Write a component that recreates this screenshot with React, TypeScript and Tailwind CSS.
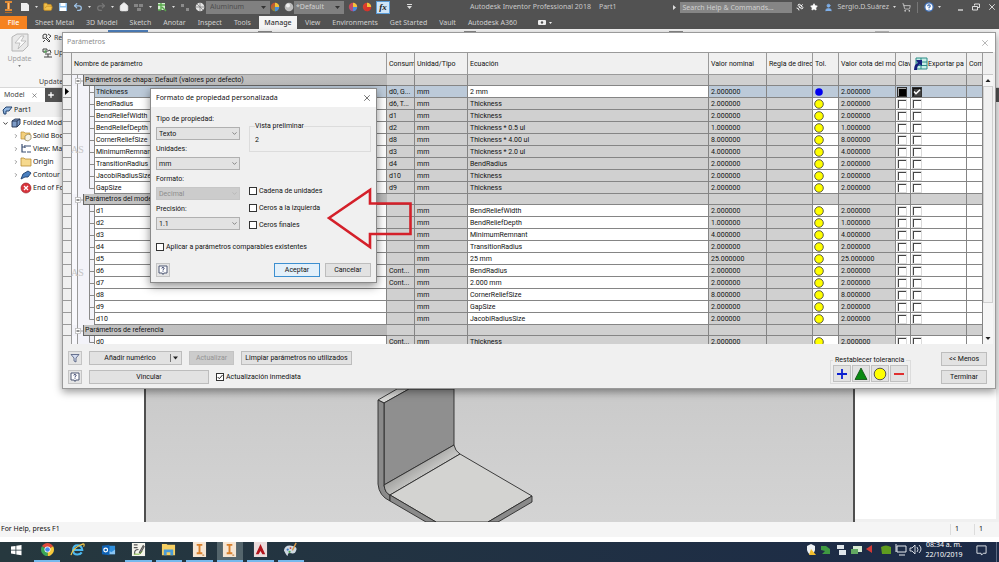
import type { ReactNode } from "react";
import {
  ChevronDown,
  ChevronRight,
  CircleHelp,
  FolderOpen,
  House,
  Plus,
  Redo2,
  Satellite,
  ShoppingCart,
  Star,
  Undo2,
  User,
  X,
} from "lucide-react";

type Kind = "sheet" | "model" | "reference";

interface Param {
  name: string;
  usedBy: string;
  equation: string;
  value: string;
  selected?: boolean;
}

interface Group {
  title: string;
  kind: Kind;
  rows: Param[];
}

const groups: Group[] = [
  {
    title: "Parámetros de chapa: Default (valores por defecto)",
    kind: "sheet",
    rows: [
      { name: "Thickness", usedBy: "d0, G...", equation: "2 mm", value: "2.000000", selected: true },
      { name: "BendRadius", usedBy: "d6, T...", equation: "Thickness", value: "2.000000" },
      { name: "BendReliefWidth", usedBy: "d1", equation: "Thickness", value: "2.000000" },
      { name: "BendReliefDepth", usedBy: "d2", equation: "Thickness * 0.5 ul", value: "1.000000" },
      { name: "CornerReliefSize", usedBy: "d8", equation: "Thickness * 4.00 ul", value: "8.000000" },
      { name: "MinimumRemnant", usedBy: "d3", equation: "Thickness * 2.0 ul", value: "4.000000" },
      { name: "TransitionRadius", usedBy: "d4", equation: "BendRadius", value: "2.000000" },
      { name: "JacobiRadiusSize", usedBy: "d10", equation: "Thickness", value: "2.000000" },
      { name: "GapSize", usedBy: "d9", equation: "Thickness", value: "2.000000" },
    ],
  },
  {
    title: "Parámetros del modelo",
    kind: "model",
    rows: [
      { name: "d1", usedBy: "", equation: "BendReliefWidth", value: "2.000000" },
      { name: "d2", usedBy: "", equation: "BendReliefDepth", value: "1.000000" },
      { name: "d3", usedBy: "", equation: "MinimumRemnant", value: "4.000000" },
      { name: "d4", usedBy: "", equation: "TransitionRadius", value: "2.000000" },
      { name: "d5", usedBy: "", equation: "25 mm", value: "25.000000" },
      { name: "d6", usedBy: "Cont...", equation: "BendRadius", value: "2.000000" },
      { name: "d7", usedBy: "Cont...", equation: "2.000 mm", value: "2.000000" },
      { name: "d8", usedBy: "", equation: "CornerReliefSize", value: "8.000000" },
      { name: "d9", usedBy: "", equation: "GapSize", value: "2.000000" },
      { name: "d10", usedBy: "", equation: "JacobiRadiusSize", value: "2.000000" },
    ],
  },
  {
    title: "Parámetros de referencia",
    kind: "reference",
    rows: [{ name: "d0", usedBy: "Cont...", equation: "Thickness", value: "2.000000" }],
  },
];

/* ---------- main application frame ---------- */

function Swatch({ id, a, b, badge }: { id: string; a: string; b: string; badge?: string }) {
  return (
    <svg viewBox="0 0 10 10" className="size-[10px] shrink-0">
      <defs>
        <linearGradient id={id} x1="0" x2="1" y1="0" y2="1">
          <stop offset="0" stopColor={a} />
          <stop offset="1" stopColor={b} />
        </linearGradient>
      </defs>
      <circle cx="5" cy="5" r="4.2" fill={`url(#${id})`} />
      <path d="M5 5 9.2 5A4.2 4.2 0 0 1 5 9.2Z" fill={badge ?? "#4b8edb"} />
      <path d="M5 5V.8A4.2 4.2 0 0 1 9.2 5Z" fill="#f3c13a" />
    </svg>
  );
}

function Caret() {
  return (
    <svg viewBox="0 0 3 2" className="h-[2px] w-[3px] shrink-0">
      <path d="M0 0h3L1.500 2Z" fill="#ddd" />
    </svg>
  );
}

function TitleBar() {
  return (
    <header className="flex h-[14px] items-center bg-[#525252] text-[7px] leading-[10px] text-[#c9c9c9]">
      <div className="flex shrink-0 items-center">
        <svg viewBox="0 0 14 14" className="h-[14px] w-4">
          <path d="M4 1h7v2H9v6h2v2H4V9h2V3H4Z" fill="#e08a35" />
          <path d="M7 3h1v6H7Z" fill="#ffc078" />
          <path d="M4 12.5h7" stroke="#b36a23" />
        </svg>
        <div className="flex items-center gap-[5px] pl-1">
          <svg viewBox="0 0 10 10" className="size-[10px]">
            <path d="M1 1h6l2 2v6H1Z" fill="#eee" />
          </svg>
          <Caret />
          <FolderOpen className="size-[10px] fill-[#f2c14c] text-[#c98f22]" />
          <svg viewBox="0 0 10 10" className="size-[10px]">
            <path d="M1 1h8v8H1Z" fill="#8cc0ee" />
            <path d="M2.500 1h5v3h-5ZM2 5.500h6v3.500H2Z" fill="#fff" />
          </svg>
          <Undo2 className="size-[10px] text-[#9fc4e8]" strokeWidth={3} />
          <Caret />
          <Redo2 className="size-[10px] text-[#777]" strokeWidth={3} />
          <Caret />
          <House className="size-[10px] fill-[#eee] text-[#eee]" />
          <svg viewBox="0 0 10 10" className="size-[10px]">
            <path d="M0 2h4v3H0ZM5 2h4v3H5ZM3 6h4v3H3Z" fill="#858585" />
          </svg>
          <Caret />
          <svg viewBox="0 0 10 10" className="size-[10px]">
            <path d="M1 1h7v7H1Z" fill="#d5ecd0" />
            <path d="M1 3h7M4 1v7M5 5l4 4M1 8h3" stroke="#59a84c" strokeWidth="1.4" />
          </svg>
          <Caret />
          <svg viewBox="0 0 10 10" className="size-[10px]">
            <path d="M1 2h3v3H1ZM6 6h3v3H6Z" fill="#8c8c8c" />
          </svg>
          <svg viewBox="0 0 10 10" className="size-[10px]">
            <circle cx="5" cy="5" r="4.3" fill="#e4e4e4" />
            <path d="M1 5h8M5 1v8M2 2l6 6" stroke="#777" strokeWidth=".7" />
          </svg>
        </div>
        <div className="ml-px grid w-16 items-center">
          <select
            aria-label="Material"
            className="col-start-1 row-start-1 h-[13px] w-full appearance-none bg-[#808080] pl-1 text-[#4e4e4e]"
          >
            <option>Aluminum</option>
          </select>
          <svg viewBox="0 0 5 3" className="col-start-1 row-start-1 mr-1 h-[3px] w-[5px] justify-self-end">
            <path d="M0 0h5L2.500 3Z" fill="#333" />
          </svg>
        </div>
        <Swatch id="sw-color" a="#e03a2a" b="#5fb54a" />
        <svg viewBox="0 0 10 10" className="ml-1 size-[10px]">
          <circle cx="5" cy="5" r="4.300" fill="#bdbdbd" />
          <circle cx="4" cy="3.500" r="2" fill="#efefef" />
        </svg>
        <div className="grid w-[50px] items-center">
          <select
            aria-label="Aspecto"
            className="col-start-1 row-start-1 h-[13px] w-full appearance-none bg-[#808080] pl-[2px] text-[#d2d2d2]"
          >
            <option>*Default</option>
          </select>
          <svg viewBox="0 0 5 3" className="col-start-1 row-start-1 mr-1 h-[3px] w-[5px] justify-self-end">
            <path d="M0 0h5L2.500 3Z" fill="#333" />
          </svg>
        </div>
        <div className="flex items-center gap-1 pl-1">
          <Swatch id="sw-adjust" a="#e0452e" b="#8a56c4" />
          <Swatch id="sw-clear" a="#e0452e" b="#cc2b2b" badge="#d8342a" />
          <button
            type="button"
            aria-label="Parámetros"
            className="h-[13px] w-[14px] border border-[#5a9bd5] bg-[#cfe4f7] font-['Liberation_Serif',serif] text-[9px] leading-[10px] font-bold text-[#222] italic"
          >
            fx
          </button>
          <svg viewBox="0 0 7 6" className="ml-3 h-[6px] w-[7px]">
            <path d="M1 0h5v1H1ZM1 2h5L3.500 5Z" fill="#ddd" />
          </svg>
        </div>
      </div>
      <div className="flex flex-1 justify-center gap-2 whitespace-nowrap">
        <span>Autodesk Inventor Professional 2018</span>
        <span>Part1</span>
      </div>
      <div className="flex shrink-0 items-center">
        <svg viewBox="0 0 3 5" className="mr-1 h-[5px] w-[3px]">
          <path d="M0 0 3 2.500 0 5Z" fill="#ddd" />
        </svg>
        <input
          type="text"
          aria-label="Search"
          placeholder="Search Help & Commands..."
          className="h-[11px] w-28 bg-[#858585] pl-[2px] text-[7px] placeholder:text-[#d0d0d0]"
        />
        <div className="flex items-center gap-[6px] pl-1">
          <Satellite className="size-[8px] text-white" strokeWidth={3} />
          <Star className="size-[8px] fill-white text-white" />
        </div>
        <User className="ml-[6px] size-[9px] fill-[#7fb0ea] text-[#7fb0ea]" />
        <span className="mr-1 ml-1">Sergio.D.Suárez</span>
        <Caret />
        <ShoppingCart className="ml-[6px] size-[9px] text-[#ddd]" />
        <span className="ml-[6px] h-[11px] w-px bg-[#777]" />
        <CircleHelp className="mr-1 ml-[6px] size-[10px] fill-white text-[#3f6fb5]" strokeWidth={3} />
        <Caret />
        <div className="flex items-center gap-[7px] pr-[2px] pl-4">
          <svg viewBox="0 0 8 8" className="size-[8px]">
            <path d="M1 7h5" stroke="#eee" strokeWidth="1.200" />
          </svg>
          <svg viewBox="0 0 8 8" className="size-[8px]">
            <path d="M2.500 2.500v-1.500h5v3.500h-1.500M.5 3.500h5v3.500h-5Z" fill="none" stroke="#eee" strokeWidth=".9" />
          </svg>
          <X className="size-[10px] text-[#eee]" />
        </div>
      </div>
    </header>
  );
}

function RibbonTabs() {
  const before = ["Sheet Metal", "3D Model", "Sketch", "Anotar", "Inspect", "Tools"];
  const after = ["View", "Environments", "Get Started", "Vault", "Autodesk A360"];
  return (
    <nav className="flex h-[15px] items-end bg-[#525252] text-[7px] leading-[13px] whitespace-nowrap text-[#d0d0d0]">
      <button type="button" className="h-[13px] w-[27px] bg-[#f58220] font-medium text-white">
        File
      </button>
      <div className="flex gap-3 px-2">
        {before.map((tab) => (
          <button key={tab} type="button" className="h-[13px]">
            {tab}
          </button>
        ))}
      </div>
      <button type="button" className="h-[13px] w-[38px] bg-[#f5f5f5] font-medium text-[#333]">
        Manage
      </button>
      <div className="flex gap-3 px-2">
        {after.map((tab) => (
          <button key={tab} type="button" className="h-[13px]">
            {tab}
          </button>
        ))}
      </div>
      <svg viewBox="0 0 15 13" className="ml-3 h-[13px] w-[15px]">
        <rect x="1" y="4" width="8" height="5" rx="1" fill="#eee" />
        <circle cx="5" cy="6.500" r="1.200" fill="#525252" />
        <path d="M12 6h3l-1.500 2Z" fill="#eee" />
      </svg>
    </nav>
  );
}

function Ribbon() {
  return (
    <section className="flex h-[59px] border-b border-[#d8d8d8] bg-[#f5f5f5] text-[7px] leading-[10px] text-[#444]">
      <div className="flex w-[39px] flex-col items-center pt-1 text-[#a0a0a0]">
        <svg viewBox="0 0 20 20" className="size-5">
          <path d="M2 4 7 1h11v12l-5 5H2Z" fill="#e9e9e9" stroke="#b5b5b5" />
          <path d="M11 3 5 10h5l-2 6 8-8h-5l3-5Z" fill="#fafafa" stroke="#b5b5b5" strokeWidth=".8" />
        </svg>
        <span className="mt-px">Update</span>
        <svg viewBox="0 0 4 3" className="mt-px h-[2px] w-[3px]">
          <path d="M0 0h4L2 3Z" fill="#777" />
        </svg>
      </div>
      <div className="flex w-[69px] flex-col pt-1">
        <div className="flex h-[15px] gap-[2px] pl-[3px]">
          <svg viewBox="0 0 10 10" className="size-[10px]">
            <path d="M1 2l2-1 2 1-1 2 4 4-1 1-4-4-2 .5ZM6 1l3 2-2 2M1 9l2-2" fill="none" stroke="#444" />
          </svg>
          <span>Rebuild All</span>
        </div>
        <div className="flex h-[15px] gap-[2px] pl-[3px]">
          <svg viewBox="0 0 10 10" className="size-[10px]">
            <path d="M1 1h4v3H1ZM3 6h6M6 6v3M2 9h8M6 3l2-1 1 3" fill="none" stroke="#444" />
            <path d="M3 1.500 5 4 2 5Z" fill="#56a658" />
          </svg>
          <span>Update Mass</span>
        </div>
        <span className="mt-[14px]">Update</span>
      </div>
      <div className="mt-px h-4 w-10 border-t-2 border-[#4f81bd] bg-[#cfdff0]" />
      <div className="flex flex-1 justify-between px-[110px]">
        <span className="mt-[2px] h-px w-[14px] bg-[#888]" />
        <span className="mt-[2px] h-px w-3 bg-[#888]" />
        <span className="mt-[2px] h-px w-[14px] bg-[#888]" />
        <span className="mt-[2px] h-px w-[14px] bg-[#bbb]" />
      </div>
    </section>
  );
}

const treeItems: { label: string; icon: ReactNode; leaf?: boolean }[] = [
  {
    label: "Solid Bodies(1)",
    icon: (
      <>
        <path d="M1 2h3l1 1h5v6H1Z" fill="#f3cf7c" stroke="#b98d35" strokeWidth=".7" />
        <path d="M5 6l3-2 3 1v4l-3 2-3-1Z" fill="#f6f2e4" stroke="#8a7a4a" strokeWidth=".7" />
      </>
    ),
  },
  {
    label: "View: Master",
    icon: <path d="M2 1v8h4M2 4h3M6 3h5M7 9h4M5 2v3" fill="none" stroke="#3b4f72" strokeWidth="1.200" />,
  },
  {
    label: "Origin",
    icon: <path d="M1 2h3l1 1h6v7H1Z" fill="#f6d98e" stroke="#b98d35" strokeWidth=".8" />,
  },
  {
    label: "Contour Flange1",
    icon: <path d="M1 10 3 5l5-3 3 2-3 4H5Z" fill="#4a7fbf" stroke="#1d3f6e" strokeWidth=".9" />,
  },
  {
    label: "End of Folded",
    leaf: true,
    icon: (
      <>
        <circle cx="6" cy="6" r="5" fill="#d9343c" stroke="#8f1f25" strokeWidth=".6" />
        <path d="M4 4l4 4M8 4l-4 4" stroke="#fff" strokeWidth="1.300" />
      </>
    ),
  },
];

function ModelBrowser() {
  return (
    <aside className="w-[146px] shrink-0 border-r-2 border-[#4f4f4f] bg-white text-[7px] leading-[12px] whitespace-nowrap text-[#222]">
      <div className="flex h-[14px] items-center bg-[#525252]">
        <button type="button" className="h-[14px] bg-white pl-1 text-[#444]">
          Model
        </button>
        <button type="button" aria-label="Cerrar panel" className="flex h-[14px] items-center bg-white pr-[7px] pl-[6px]">
          <X className="size-[7px] text-[#555]" />
        </button>
        <button type="button" aria-label="Añadir panel" className="pl-[2px] text-white">
          <Plus className="size-[8px]" strokeWidth={4} />
        </button>
      </div>
      <div className="flex h-[15px] items-center gap-px bg-[#f0f0f0] pl-[2px]">
        <svg viewBox="0 0 11 10" className="h-[10px] w-[11px]">
          <path d="M1 5 4 2h6l-3 4H4v3H2Z" fill="#8fb3dd" stroke="#22436f" />
        </svg>
        Part1
      </div>
      <ul>
        <li className="flex h-[12px] items-center gap-[2px] pl-[2px]">
          <ChevronDown className="size-[7px]" strokeWidth={3} />
          <svg viewBox="0 0 10 10" className="size-[10px]">
            <path d="M1 3 4 1h5v5L6 9H1ZM1 3h5v6M6 3l3-2" fill="#7d9cc8" stroke="#22324f" strokeWidth=".9" />
          </svg>
          Folded Model
        </li>
        {treeItems.map((item) => (
          <li key={item.label} className="flex h-[13px] items-center gap-px pl-[13px]">
            {item.leaf ? (
              <span className="w-[6px]" />
            ) : (
              <ChevronRight className="size-[6px] text-[#777]" strokeWidth={3} />
            )}
            <svg viewBox="0 0 12 12" className="size-3">
              {item.icon}
            </svg>
            {item.label}
          </li>
        ))}
      </ul>
    </aside>
  );
}

function Viewport() {
  return (
    <main className="flex flex-1 flex-col justify-end bg-linear-to-b from-[#b4b4b4] to-[#d4d4d4] pl-[230px]">
      <svg viewBox="376 389 160 133" className="h-[133px] w-40">
        <defs>
          <linearGradient id="bend" x1="0" x2="1" y1="0" y2="1">
            <stop offset=".35" stopColor="#9a9a98" />
            <stop offset=".65" stopColor="#d6d6d4" />
          </linearGradient>
        </defs>
        <g stroke="#2b2b2b" strokeWidth=".9" strokeLinejoin="round">
          <path d="M378 400 397 389H409L384 403Z" fill="#d8d8d6" />
          <path d="M384 403 409 389H454V445L384 485Z" fill="#8f8f8f" />
          <path d="M378 400 384 403V485Q385 493 390 495V501Q379 496 378 484Z" fill="#8a8a8a" />
          <path d="M384 485 454 445Q455 451 460 454L390 495Q385 493 384 485Z" fill="url(#bend)" />
          <path d="M390 495 460 454 532 496 488 522H436Z" fill="#d3d3d1" />
          <path d="M390 495 436 522H426L390 501Z" fill="#8a8a8a" />
          <path d="M532 496V502L498 522H488Z" fill="#8a8a8a" />
        </g>
      </svg>
    </main>
  );
}

/* ---------- shared dialog controls ---------- */

function DialogButton({ children, className }: { children: ReactNode; className: string }) {
  return (
    <button
      type="button"
      className={`flex h-[14px] items-center justify-center border leading-[10px] whitespace-nowrap ${className}`}
    >
      {children}
    </button>
  );
}

function HelpButton() {
  return (
    <button
      type="button"
      aria-label="Ayuda"
      className="flex size-[14px] items-center justify-center border border-[#c4c4c4] bg-[#e4e4e4]"
    >
      <svg viewBox="0 0 10 10" className="size-[10px]">
        <path d="M1 1h8v7H6L5 9.500 4 8H1Z" fill="#fff" stroke="#3d4766" strokeWidth=".9" />
        <path d="M3.800 3.500Q4 2.300 5 2.400T6.100 3.600Q6 4.200 5 4.700V5.500M5 6.300v.9" fill="none" stroke="#222e5c" strokeWidth=".9" />
      </svg>
    </button>
  );
}

function CheckField({ label, checked = false }: { label: string; checked?: boolean }) {
  return (
    <label className="flex h-[10px] items-center gap-[2px] leading-[10px] whitespace-nowrap">
      <span className="grid">
        <input
          type="checkbox"
          defaultChecked={checked}
          className="peer col-start-1 row-start-1 size-[8px] appearance-none border border-[#333] bg-white"
        />
        <svg viewBox="0 0 8 8" className="pointer-events-none col-start-1 row-start-1 hidden size-[8px] peer-checked:block">
          <path d="M1.700 4 3.300 5.700 6.500 2" fill="none" stroke="#222" />
        </svg>
      </span>
      {label}
    </label>
  );
}

function SelectField({ id, label, value, disabled = false }: { id: string; label: string; value: string; disabled?: boolean }) {
  return (
    <div>
      <label htmlFor={id} className="block leading-[10px]">
        {label}
      </label>
      <div className="mt-[3px] grid items-center">
        <select
          id={id}
          disabled={disabled}
          className="col-start-1 row-start-1 h-[13px] w-full appearance-none border border-[#b0b0b0] bg-[#e2e2e2] pl-[2px] leading-[10px] disabled:border-[#c6c6c6] disabled:bg-[#cccccc] disabled:text-[#8d8d8d]"
        >
          <option>{value}</option>
        </select>
        <ChevronDown
          className={`pointer-events-none col-start-1 row-start-1 mr-[2px] size-[7px] justify-self-end ${disabled ? "text-[#aaa]" : "text-[#444]"}`}
        />
      </div>
    </div>
  );
}

/* ---------- parameters window ---------- */

function GridCheck({ label, selected, checked = false }: { label: string; selected?: boolean; checked?: boolean }) {
  return (
    <span className={`grid size-[10px] place-items-center ${selected ? "bg-[#333]" : "bg-[#dadada]"}`}>
      <input
        type="checkbox"
        aria-label={label}
        defaultChecked={checked}
        className={`col-start-1 row-start-1 size-[8px] appearance-none border-t border-l ${selected ? (checked ? "border-[#111] bg-[#444]" : "border-[#aaa] bg-black") : "border-[#444] bg-white"}`}
      />
      {checked && (
        <svg viewBox="0 0 8 8" className="pointer-events-none col-start-1 row-start-1 size-[8px]">
          <path d="M1 3.500 3 5.700 7 1.700" fill="none" stroke="#fff" strokeWidth="1.600" />
        </svg>
      )}
    </span>
  );
}

function ParamRow({ param, kind, last }: { param: Param; kind: Kind; last: boolean }) {
  const { selected } = param;
  const box = "h-[12px] overflow-hidden border-r border-b border-[#858585] p-0";
  const cell = `${box} pt-px leading-[10px]`;
  const grey = selected ? "bg-[#bccad9]" : "bg-[#d0d0d0]";
  const white = selected ? "bg-[#bccad9]" : "bg-white";
  const equationBg = selected || kind === "model" ? "bg-white" : "bg-[#d0d0d0]";
  return (
    <tr>
      <td className="h-[12px] border-r border-b border-[#9a9a9a] bg-[#f0f0f0] p-0">
        {selected && (
          <svg viewBox="0 0 4 7" className="ml-[2px] block h-[7px] w-1">
            <path d="M0 0 4 3.500 0 7Z" fill="#000" />
          </svg>
        )}
      </td>
      <td className="h-[12px] border-r border-[#9a9a9a] bg-[#f8f8fc] p-0" />
      <td className="h-[12px] border-r border-[#858585] bg-[#f3f3f9] p-0">
        <svg viewBox="0 0 16 12" className="block h-[12px] w-4">
          <path d={last ? "M11.500 0V6.500H16" : "M11.500 0V12M11.500 6.500H16"} fill="none" stroke="#8a8a8a" />
        </svg>
      </td>
      <td className={`${cell} ${white} pl-px`}>{param.name}</td>
      <td className={`${cell} ${grey} pl-[2px]`}>{param.usedBy}</td>
      <td className={`${cell} ${grey} pl-[2px]`}>mm</td>
      <td className={`${cell} ${equationBg} pl-[2px]`}>{param.equation}</td>
      <td className={`${cell} ${grey} pl-[2px]`}>{param.value}</td>
      <td className={`${cell} ${grey}`} />
      <td className={`${box} ${white} pl-px`}>
        <svg viewBox="0 0 10 10" className="block size-[10px]">
          {selected ? (
            <circle cx="5" cy="5" r="3.800" fill="#0000f0" />
          ) : (
            <circle cx="5" cy="5" r="4.300" fill="#ffff00" stroke="#333" strokeWidth=".8" />
          )}
        </svg>
      </td>
      <td className={`${cell} ${grey} pl-[2px]`}>{param.value}</td>
      <td className={`${box} ${white} pl-px`}>
        <GridCheck label={`Clave ${param.name}`} selected={selected} />
      </td>
      <td className={`${box} ${white} pl-px`}>
        <GridCheck label={`Exportar ${param.name}`} selected={selected} checked={selected} />
      </td>
      <td className={`${box} ${white}`} />
    </tr>
  );
}

function GroupRows({ group }: { group: Group }) {
  const filler = "h-[11px] border-r border-b border-[#858585] bg-[#d0d0d0] p-0";
  return (
    <>
      <tr>
        <td className="h-[11px] border-r border-b border-[#9a9a9a] bg-[#f0f0f0] p-0" />
        <td colSpan={3} className="h-[11px] bg-[#f3f3f9] p-0">
          <div className="flex h-[11px]">
            <svg viewBox="0 0 11 11" className="h-[11px] w-[11px]">
              <path d="M5.500 0V11" stroke="#9a9a9a" />
              <rect x="3.500" y="3.500" width="5" height="5" fill="#fff" stroke="#bbb" strokeWidth=".8" />
              <path d="M4.500 6H7.500" stroke="#222" />
              <path d="M9 6h2" stroke="#9a9a9a" />
            </svg>
            <div className="flex-1 border-b border-l border-[#666] bg-linear-to-r from-[#c4c4c4] to-[#b9b9b9] pl-px leading-[11px]">
              {group.title}
            </div>
          </div>
        </td>
        {Array.from({ length: 10 }, (_, i) => (
          <td key={i} className={filler} />
        ))}
      </tr>
      {group.rows.map((param, i) => (
        <ParamRow key={param.name} param={param} kind={group.kind} last={i === group.rows.length - 1} />
      ))}
    </>
  );
}

function ParamTable() {
  const head =
    "h-[23px] overflow-hidden border-t border-r border-b border-[#9a9a9a] bg-[#f0f0f0] p-0 pt-px pl-[2px] text-left font-normal";
  return (
    <div className="flex h-[292px] overflow-hidden">
      <table className="w-full flex-1 table-fixed border-separate border-spacing-0 leading-[11px] whitespace-nowrap">
        <colgroup>
          <col className="w-[9px]" />
          <col className="w-[6px]" />
          <col className="w-[17px]" />
          <col className="w-[292px]" />
          <col className="w-[28px]" />
          <col className="w-[53px]" />
          <col />
          <col className="w-[58px]" />
          <col className="w-[46px]" />
          <col className="w-[26px]" />
          <col className="w-[57px]" />
          <col className="w-[15px]" />
          <col className="w-[56px]" />
          <col className="w-[16px]" />
        </colgroup>
        <thead>
          <tr>
            <th className="h-[23px] border-t border-r border-b border-[#9a9a9a] p-0" />
            <th colSpan={3} className={head}>
              Nombre de parámetro
            </th>
            <th className={head}>Consum</th>
            <th className={head}>Unidad/Tipo</th>
            <th className={head}>Ecuación</th>
            <th className={head}>Valor nominal</th>
            <th className={head}>Regla de direc</th>
            <th className={head}>Tol.</th>
            <th className={head}>Valor cota del mo</th>
            <th className={head}>Clav</th>
            <th className={head}>
              <div className="flex items-center">
                <svg viewBox="0 0 15 15" className="size-[15px] shrink-0">
                  <path d="M3 1h11v11H3Z" fill="#c9efe9" stroke="#2b8c86" />
                  <path d="M3 5h11M3 8.500h11M8 1v11" stroke="#2b8c86" />
                  <path d="M1 13Q1 7 5 6L3 3H9V9L7 7.500Q4 8 4 13Z" fill="#16207c" />
                </svg>
                Exportar pa
              </div>
            </th>
            <th className={head}>Com</th>
          </tr>
        </thead>
        <tbody>
          {groups.map((group) => (
            <GroupRows key={group.kind} group={group} />
          ))}
        </tbody>
      </table>
      <div className="mr-[2px] flex w-[10px] shrink-0 flex-col items-center border-t border-[#9a9a9a] bg-[#f6f6f6]">
        <span className="h-[22px] w-full border-b border-[#c9c9c9] bg-[#f0f0f0]" />
        <svg viewBox="0 0 10 11" className="h-[11px] w-[10px]">
          <path d="M2.500 7 5 4 7.500 7Z" fill="#222" />
        </svg>
        <span className="h-[217px] w-full border border-[#cfcfcf] bg-[#f0f0f0]" />
        <span className="flex-1" />
        <svg viewBox="0 0 10 11" className="h-[11px] w-[10px]">
          <path d="M2.500 4 5 7 7.500 4Z" fill="#222" />
        </svg>
      </div>
    </div>
  );
}

const tolerances: { label: string; icon: ReactNode }[] = [
  { label: "Superior", icon: <path d="M7 2V12M2 7H12" stroke="#0a1fd0" strokeWidth="1.800" /> },
  { label: "Mediana", icon: <path d="M7 1 13 12.500H1Z" fill="#0a8a12" stroke="#0a4a0e" strokeWidth=".8" /> },
  { label: "Nominal", icon: <circle cx="7" cy="7" r="5.800" fill="#ffff00" stroke="#444" strokeWidth=".9" /> },
  { label: "Inferior", icon: <path d="M2 7H12" stroke="#e01b1b" strokeWidth="1.800" /> },
];

function ParametersWindow() {
  const flat = "border-[#bdbdbd] bg-[#e2e2e2]";
  return (
    <section className="absolute top-8 right-[3px] left-[62px] border border-[#9a9a9a] bg-[#f0f0f0] font-[Roboto,sans-serif] text-[7px] shadow-[0_3px_8px_rgba(0,0,0,0.4)]">
      <div className="flex h-[19px] items-center justify-between bg-white pr-[5px] pl-1">
        <h1 className="font-['Noto_Sans',sans-serif] text-[#8c8c8c]">Parámetros</h1>
        <button type="button" aria-label="Cerrar">
          <X className="block size-[10px] text-[#8c8c8c]" strokeWidth={1.5} />
        </button>
      </div>
      <div className="relative">
        <ParamTable />
        <span className="absolute top-[93px] left-[8px] font-['Liberation_Serif',serif] text-[10px] leading-[10px] text-[#c4c4c4]">
          AS
        </span>
        <span className="absolute top-[216px] left-[8px] font-['Liberation_Serif',serif] text-[10px] leading-[10px] text-[#c4c4c4]">
          AS
        </span>
      </div>
      <footer className="flex justify-between pt-[7px] pr-2 pb-1 pl-[5px]">
        <div className="flex flex-col gap-[5px]">
          <div className="flex gap-[7px]">
            <button
              type="button"
              aria-label="Filtrar"
              className="flex size-[14px] items-center justify-center border border-[#c4c4c4] bg-[#e4e4e4]"
            >
              <svg viewBox="0 0 10 10" className="size-[10px]">
                <path d="M1 1.500h8L6 5v4L4 8V5Z" fill="#d4dcf0" stroke="#4a5577" strokeWidth=".8" />
              </svg>
            </button>
            <div className="flex">
              <DialogButton className="w-[81px] border-r-0 border-[#bdbdbd] bg-[#e2e2e2]">Añadir numérico</DialogButton>
              <button
                type="button"
                aria-label="Más opciones"
                className="flex h-[14px] w-3 items-center border border-l-0 border-[#bdbdbd] bg-[#e2e2e2]"
              >
                <svg viewBox="0 0 11 10" className="h-[10px] w-[11px]">
                  <path d="M.5 1V9" stroke="#777" />
                  <path d="M3 3.500h5L5.500 6.500Z" fill="#222" />
                </svg>
              </button>
            </div>
            <DialogButton className="w-[45px] border-[#c4c4c4] bg-[#cccccc] text-[#949494]">Actualizar</DialogButton>
            <DialogButton className={`w-[111px] ${flat}`}>Limpiar parámetros no utilizados</DialogButton>
          </div>
          <div className="flex items-center gap-[7px]">
            <HelpButton />
            <DialogButton className={`w-[120px] ${flat}`}>Vincular</DialogButton>
            <CheckField label="Actualización inmediata" checked />
          </div>
        </div>
        <div className="flex gap-[30px]">
          <fieldset className="mt-1 w-[81px] border border-[#dcdcdc] px-[2px] pb-px">
            <legend className="px-[2px] leading-[10px] whitespace-nowrap">Restablecer tolerancia</legend>
            <div className="flex gap-px">
              {tolerances.map((tol) => (
                <button
                  key={tol.label}
                  type="button"
                  aria-label={tol.label}
                  className="flex h-[17px] w-[18px] items-center justify-center border border-[#c0c0c0] bg-[#e2e2e2]"
                >
                  <svg viewBox="0 0 14 14" className="size-[14px]">
                    {tol.icon}
                  </svg>
                </button>
              ))}
            </div>
          </fieldset>
          <div className="flex flex-col gap-[4px] pt-px">
            <DialogButton className={`w-[46px] ${flat}`}>&lt;&lt; Menos</DialogButton>
            <DialogButton className={`w-[46px] ${flat}`}>Terminar</DialogButton>
          </div>
        </div>
      </footer>
    </section>
  );
}

/* ---------- property format dialog ---------- */

function FormatDialog() {
  return (
    <section
      role="dialog"
      aria-label="Formato de propiedad personalizada"
      className="absolute top-[88px] left-[150px] w-[227px] border border-[#8a8a8a] bg-[#f0f0f0] font-[Roboto,sans-serif] text-[7px] text-[#111] shadow-[0_3px_9px_rgba(0,0,0,0.45)]"
    >
      <div className="flex h-[18px] items-center justify-between bg-white pr-1 pl-[5px]">
        <h2 className="font-['Noto_Sans',sans-serif]">Formato de propiedad personalizada</h2>
        <button type="button" aria-label="Cerrar">
          <X className="block size-[10px] text-[#222]" strokeWidth={1.5} />
        </button>
      </div>
      <form className="px-[5px] pt-[7px] pb-[5px]">
        <div className="flex gap-[9px]">
          <div className="flex w-[84px] flex-col gap-1">
            <SelectField id="property-type" label="Tipo de propiedad:" value="Texto" />
            <SelectField id="units" label="Unidades:" value="mm" />
            <SelectField id="format" label="Formato:" value="Decimal" disabled />
            <SelectField id="precision" label="Precisión:" value="1.1" />
          </div>
          <div className="flex flex-1 flex-col justify-between pt-[7px]">
            <fieldset className="border border-[#dcdcdc] px-[5px] pb-[6px]">
              <legend className="leading-[10px]">Vista preliminar</legend>
              <p className="pt-1 leading-[10px]">2</p>
            </fieldset>
            <div className="flex flex-col gap-[7px]">
              <CheckField label="Cadena de unidades" />
              <CheckField label="Ceros a la izquierda" />
              <CheckField label="Ceros finales" />
            </div>
          </div>
        </div>
        <div className="mt-3">
          <CheckField label="Aplicar a parámetros comparables existentes" />
        </div>
        <div className="mt-[11px] flex justify-between">
          <HelpButton />
          <div className="flex gap-[5px]">
            <DialogButton className="w-[46px] border-[#3c8fd0] bg-[#e3f0fa]">Aceptar</DialogButton>
            <DialogButton className="w-[46px] border-[#bdbdbd] bg-[#e2e2e2]">Cancelar</DialogButton>
          </div>
        </div>
      </form>
    </section>
  );
}

/* ---------- windows taskbar ---------- */

function InventorIcon() {
  return (
    <>
      <path d="M1 0h14v16H1Z" fill="#f7e6d3" />
      <path d="M5 2h6v2H9v7h2v2H5V11h2V4H5Z" fill="#d9802c" />
      <path d="M11 14h2" stroke="#b06820" />
    </>
  );
}

const apps: { label: string; running?: boolean; active?: boolean; icon: ReactNode }[] = [
  {
    label: "Chrome",
    running: true,
    icon: (
      <>
        <path d="M8 8 2 4.500A7 7 0 0 1 14 4.500Z" fill="#e04a3a" />
        <path d="M8 8 14 4.500A7 7 0 0 1 8 15Z" fill="#f7ca3c" />
        <path d="M8 8V15A7 7 0 0 1 2 4.500Z" fill="#3aa757" />
        <circle cx="8" cy="8" r="3.200" fill="#fff" />
        <circle cx="8" cy="8" r="2.500" fill="#4688f1" />
      </>
    ),
  },
  {
    label: "Internet Explorer",
    icon: (
      <>
        <path d="M3.500 8.500H13Q12.500 3.500 8 3.500T3.300 8.500 8 13.300Q11 13.300 12.500 11" fill="none" stroke="#4cb8ee" strokeWidth="2.300" />
        <path d="M1 14Q3 6 14 2Q16 2 14.500 5" fill="none" stroke="#f0c84a" strokeWidth="1.200" />
      </>
    ),
  },
  {
    label: "Outlook",
    icon: (
      <>
        <path d="M7 4h8v9H7Z" fill="#2f8fdc" />
        <path d="M7 8l4 3 4-3v5H7Z" fill="#8bc5f2" />
        <path d="M1 4l8-1v11l-8-1Z" fill="#0f62b5" />
        <circle cx="5" cy="8.500" r="2" fill="none" stroke="#fff" strokeWidth="1.300" />
      </>
    ),
  },
  {
    label: "Notepad++",
    running: true,
    icon: (
      <>
        <path d="M1 1h14v14H1Z" fill="#f4f4ec" />
        <path d="M3 3h4M3 6h4M4 13Q3 8 8 8M9 11l4-7 1 1-4 7Z" fill="none" stroke="#555" strokeWidth="1.200" />
        <path d="M3 13h6l3-3" stroke="#7dbb3c" fill="none" />
      </>
    ),
  },
  {
    label: "Explorador",
    running: true,
    icon: (
      <>
        <path d="M1 2h5l1 1h8v11H1Z" fill="#f5cf62" />
        <path d="M3 8h10v6h-3v-3H6v3H3Z" fill="#4a9bd8" />
      </>
    ),
  },
  { label: "Inventor", running: true, icon: <InventorIcon /> },
  { label: "Inventor 2018", running: true, active: true, icon: <InventorIcon /> },
  {
    label: "AutoCAD",
    running: true,
    icon: (
      <>
        <path d="M1 0h14v16H1Z" fill="#ecdcdc" />
        <path d="M8 2 13 13H10L8 9.500 6 13H3Z" fill="#b3141c" />
      </>
    ),
  },
  {
    label: "Paint",
    running: true,
    icon: (
      <>
        <path d="M1 9Q2 3 9 4T14 9Q13 13 9 12T5 14 1 9Z" fill="#cfd9e2" />
        <path d="M10 9 14 1" stroke="#d79a4a" strokeWidth="1.500" />
        <circle cx="5" cy="8" r="1.200" fill="#3d78c2" />
        <circle cx="8" cy="6.500" r="1" fill="#cf3d35" />
        <circle cx="7" cy="10.500" r="1.200" fill="#4aa84e" />
      </>
    ),
  },
];

function Taskbar() {
  return (
    <footer className="flex h-5 overflow-hidden bg-linear-to-r from-[#26383e] to-[#1c2a47] text-[7px] text-white">
      <button type="button" aria-label="Inicio" className="flex w-8 items-center justify-center pb-[5px]">
        <svg viewBox="0 0 12 12" className="size-3">
          <path d="M1 2.500 5.500 2V5.700H1ZM6.300 1.800 11.500 1V5.700H6.300ZM1 6.500H5.500V10.200L1 9.600ZM6.300 6.500H11.500V11.200L6.300 10.400Z" fill="#fff" />
        </svg>
      </button>
      <div className="grid w-[274px] grid-cols-9">
        {apps.map((app) => (
          <button
            key={app.label}
            type="button"
            aria-label={app.label}
            className={`mx-[2px] flex justify-center border-b-2 ${app.running ? "border-[#76b9ed]" : "border-transparent"} ${app.active ? "bg-[#54656c]" : ""}`}
          >
            <svg viewBox="0 0 16 16" className="size-[15px]">
              {app.icon}
            </svg>
          </button>
        ))}
      </div>
      <div className="ml-auto flex">
        <svg viewBox="0 0 116 16" className="h-4 w-[116px]">
          <path d="M1 4l4-2 4 2v4q-1 4-4 5-3-1-4-5Z" fill="#eef2f5" />
          <path d="M5 7l5 6H3Z" fill="#f2bd2c" />
          <path d="M15 4h5l4 3v5h-8l3-3-4-1Z" fill="#3f9a41" />
          <path d="M31 3h7v4h-7ZM33 8h7v5h-7Z" fill="#dfe5ea" />
          <path d="M47 4h9v6h-9Z" fill="#d8ead3" />
          <path d="M45 7h7v5h-7Z" fill="#62a861" />
          <path d="M66 3v8l-6-4Z" fill="#d43a36" />
          <path d="M75 5q5-3 10 0v7h-9Z" fill="#5f9b1f" />
          <path d="M91 4h9v6h-9ZM93 13h6M90 2v8" fill="none" stroke="#e5e9ee" />
          <path d="M104 6h2l3-3v9l-3-3h-2ZM111 5q2 3 0 5M113 3q4 4 0 8" fill="none" stroke="#e5e9ee" strokeWidth=".9" />
        </svg>
        <div className="flex w-11 flex-col items-center justify-end pb-[2px] leading-[10px] whitespace-nowrap">
          <span>08:34 a. m.</span>
          <span>22/10/2019</span>
        </div>
        <button type="button" aria-label="Notificaciones" className="flex w-[31px] justify-center border-r border-[#5b6a82] pt-[3px]">
          <svg viewBox="0 0 12 12" className="size-[11px]">
            <path d="M1 1h10v8H8L6 11 5.500 9H1Z" fill="none" stroke="#e5e9ee" />
          </svg>
        </button>
        <span className="w-[2px]" />
      </div>
    </footer>
  );
}

export default function App() {
  return (
    <div className="relative flex min-h-screen flex-col overflow-hidden bg-white font-['Noto_Sans','Open_Sans',sans-serif] text-[#111]">
      <TitleBar />
      <RibbonTabs />
      <Ribbon />
      <div className="flex flex-1">
        <ModelBrowser />
        <Viewport />
        <aside className="flex w-[146px] shrink-0 flex-col border-l-2 border-[#4f4f4f] bg-[#f0f0f0]">
          <div className="h-[14px] bg-[#525252]" />
          <div className="mr-[3px] mb-[3px] flex-1 bg-white" />
        </aside>
      </div>
      <div className="mb-[5px] flex h-[15px] items-center justify-between bg-[#f5f5f5] px-px text-[7px]">
        <span>For Help, press F1</span>
        <div className="flex h-[14px] items-center">
          <span className="w-6 border-l border-[#dcdcdc] pl-1">1</span>
          <span className="w-6 border-l border-[#dcdcdc] pl-1">1</span>
        </div>
      </div>
      <Taskbar />
      <ParametersWindow />
      <FormatDialog />
      <svg
        viewBox="326 186 88 64"
        className="pointer-events-none absolute top-[186px] left-[326px] h-16 w-[88px]"
      >
        <path d="M329 218 370 190V203.500H410.500V234H370V247Z" fill="none" stroke="#d4202a" strokeWidth="2.600" />
      </svg>
    </div>
  );
}
